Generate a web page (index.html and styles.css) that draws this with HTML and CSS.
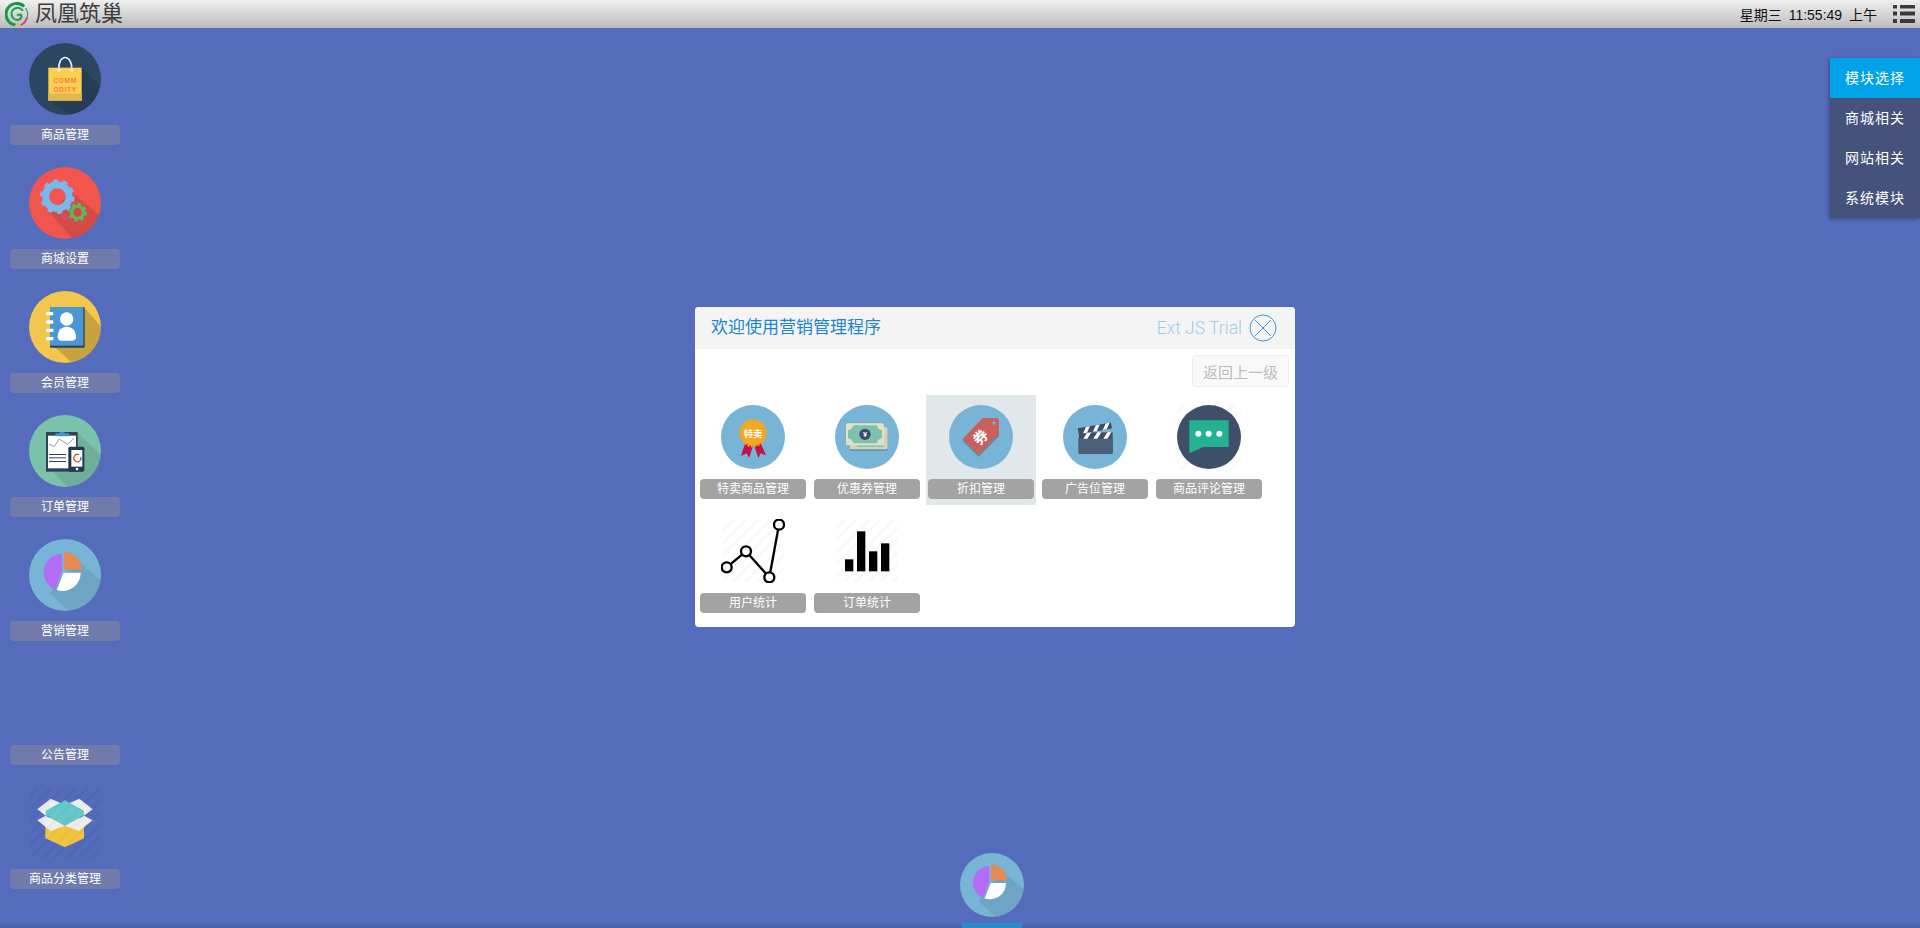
FILE: index.html
```html
<!DOCTYPE html>
<html lang="zh-CN">
<head>
<meta charset="utf-8">
<title>凤凰筑巢</title>
<link rel="stylesheet" href="styles.css">
</head>
<body>
<svg class="defs" width="0" height="0" aria-hidden="true">
  <defs>
    <pattern id="hatch" width="26" height="26" patternUnits="userSpaceOnUse" patternTransform="rotate(45)">
      <rect width="10" height="26" fill="#000" fill-opacity=".025"/>
    </pattern>
    <symbol id="pie" viewBox="87 27 216 216">
      <clipPath id="pieClip"><circle cx="195" cy="135" r="108"/></clipPath>
      <circle cx="195" cy="135" r="108" fill="#78b4d6"/>
      <polygon points="225,85 320,165 320,260 225,260 150,190" fill="#000" fill-opacity=".08" clip-path="url(#pieClip)"/>
      <path d="M186 71A56 56 0 0 0 164 178L186 124Z" fill="#b56cf5"/>
      <path d="M192 66A55 55 0 0 1 246 119H192Z" fill="#e58a54"/>
      <path d="M191 128H242A54 54 0 0 1 170 180Z" fill="#fff"/>
    </symbol>
  </defs>
</svg>

<header class="topbar">
  <div class="brand">
    <svg class="brand-mark" viewBox="15 2 74 74">
      <path d="M72 15A32 32 0 1 0 46 70" fill="none" stroke="#159a45" stroke-width="9"/>
      <path d="M68 28A18 18 0 1 0 54 55C62 52 65 46 63 40H50" fill="none" stroke="#1ea04c" stroke-width="6"/>
      <path d="M76 20A34 34 0 0 1 60 71" fill="none" stroke="#1a9a5a" stroke-width="3"/>
      <path d="M80 48A32 32 0 0 1 62 70" fill="none" stroke="#e8367e" stroke-width="5"/>
      <path d="M62 70A32 32 0 0 1 44 72" fill="none" stroke="#f4b92f" stroke-width="4"/>
    </svg>
    <span class="brand-name">凤凰筑巢</span>
  </div>
  <div class="status">
    <span class="clock">星期三 11:55:49 上午</span>
    <svg class="list-icon" viewBox="0 0 22 18">
      <rect x="0" y="0" width="4" height="3.5"/><rect x="7" y="0" width="15" height="3.5"/>
      <rect x="0" y="6.5" width="4" height="4"/><rect x="7" y="6.5" width="15" height="4"/>
      <rect x="0" y="14" width="4" height="4"/><rect x="7" y="14" width="15" height="4"/>
    </svg>
  </div>
</header>

<main class="desktop">
  <nav class="shortcuts">
    <a class="shortcut">
      <svg class="shortcut-icon" viewBox="87 129 216 216">
        <clipPath id="c1"><circle cx="195" cy="237" r="108"/></clipPath>
        <circle cx="195" cy="237" r="108" fill="#2b4661"/>
        <polygon points="245,203 320,278 320,360 230,360 145,302" fill="#000" fill-opacity=".12" clip-path="url(#c1)"/>
        <path d="M177 210C172 160 218 160 215 210" fill="none" stroke="#e8edf2" stroke-width="5"/>
        <rect x="145" y="203" width="100" height="99" fill="#fdcf4e"/>
        <rect x="145" y="281" width="100" height="21" fill="#e2b551"/>
        <circle cx="177" cy="211" r="5" fill="#e8edf2"/><circle cx="215" cy="211" r="5" fill="#e8edf2"/>
        <text class="bag-text" x="195" y="248">COMM</text>
        <text class="bag-text" x="195" y="275">ODITY</text>
      </svg>
      <span class="shortcut-label">商品管理</span>
    </a>
    <a class="shortcut">
      <svg class="shortcut-icon" viewBox="87 501 216 216">
        <clipPath id="c2"><circle cx="195" cy="609" r="108"/></clipPath>
        <circle cx="195" cy="609" r="108" fill="#f2554e"/>
        <polygon points="215,575 320,665 320,730 230,730 150,640" fill="#000" fill-opacity=".12" clip-path="url(#c2)"/>
        <circle cx="172" cy="590" r="35.5" fill="none" stroke="#7bb8ea" stroke-width="21"/>
        <circle cx="172" cy="590" r="48" fill="none" stroke="#7bb8ea" stroke-width="8" stroke-dasharray="15 15.16"/>
        <circle cx="233" cy="637" r="18" fill="none" stroke="#5cb85f" stroke-width="10"/>
        <circle cx="233" cy="637" r="25" fill="none" stroke="#5cb85f" stroke-width="6" stroke-dasharray="10 9.63"/>
        <circle cx="197" cy="650" r="7" fill="none" stroke="#c8577f" stroke-width="4"/>
      </svg>
      <span class="shortcut-label">商城设置</span>
    </a>
    <a class="shortcut">
      <svg class="shortcut-icon" viewBox="87 63 216 216">
        <clipPath id="c3"><circle cx="195" cy="171" r="108"/></clipPath>
        <circle cx="195" cy="171" r="108" fill="#f3c64d"/>
        <polygon points="252,112 320,190 320,300 240,300 165,232" fill="#000" fill-opacity=".18" clip-path="url(#c3)"/>
        <rect x="150" y="111" width="104" height="122" rx="3" fill="#2c4257"/>
        <rect x="150" y="111" width="100" height="116" fill="#4b96d3"/>
        <rect x="138" y="126" width="22" height="10" rx="2" fill="#fff"/>
        <rect x="138" y="151" width="22" height="10" rx="2" fill="#fff"/>
        <rect x="138" y="176" width="22" height="10" rx="2" fill="#fff"/>
        <rect x="138" y="201" width="22" height="10" rx="2" fill="#fff"/>
        <circle cx="200" cy="147" r="20" fill="#fff"/>
        <path d="M173 202C173 180 185 170 200 170S228 180 228 202C228 209 222 212 216 212H185C178 212 173 209 173 202Z" fill="#fff"/>
      </svg>
      <span class="shortcut-label">会员管理</span>
    </a>
    <a class="shortcut">
      <svg class="shortcut-icon" viewBox="87 435 216 216">
        <clipPath id="c4"><circle cx="195" cy="543" r="108"/></clipPath>
        <circle cx="195" cy="543" r="108" fill="#7bc2ac"/>
        <polygon points="233,490 320,570 320,670 220,670 150,595" fill="#000" fill-opacity=".1" clip-path="url(#c4)"/>
        <rect x="138" y="486" width="95" height="119" fill="#2e4358"/>
        <rect x="144" y="497" width="84" height="98" fill="#fff"/>
        <path d="M166 490H177C178 484 194 484 195 490H207V499H166Z" fill="#4b8fc9"/>
        <polyline points="147,522 163,530 177,507 203,523 222,505" fill="none" stroke="#5c7488" stroke-width="2"/>
        <rect x="147" y="552" width="51" height="3" fill="#2e4358"/>
        <rect x="147" y="562" width="51" height="3" fill="#2e4358"/>
        <rect x="147" y="573" width="51" height="3" fill="#2e4358"/>
        <rect x="205" y="530" width="48" height="75" rx="5" fill="#22384c"/>
        <rect x="214" y="540" width="33" height="50" fill="#fff"/>
        <path d="M237 554A11 11 0 1 0 241 571" fill="none" stroke="#e3552f" stroke-width="4"/>
        <path d="M241 571A11 11 0 0 0 242 560" fill="none" stroke="#2f7fbf" stroke-width="4"/>
        <circle cx="231" cy="597" r="4" fill="#fff"/>
      </svg>
      <span class="shortcut-label">订单管理</span>
    </a>
    <a class="shortcut">
      <svg class="shortcut-icon"><use href="#pie"/></svg>
      <span class="shortcut-label">营销管理</span>
    </a>
    <a class="shortcut">
      <span class="shortcut-icon"></span>
      <span class="shortcut-label">公告管理</span>
    </a>
    <a class="shortcut">
      <svg class="shortcut-icon" viewBox="87 771 216 216">
        <rect x="90" y="775" width="210" height="210" fill="url(#hatch)"/>
        <polygon points="136,870 195,850 252,870 252,925 195,952 136,925" fill="#f2c53f"/>
        <polygon points="112,871 137,857 195,887 152,903" fill="#eeeeee"/>
        <polygon points="278,871 252,857 195,887 238,903" fill="#eeeeee"/>
        <polygon points="112,838 152,806 195,825 137,857" fill="#eeeeee"/>
        <polygon points="278,838 238,806 195,825 252,857" fill="#eeeeee"/>
        <polygon points="137,842 195,811 252,842 252,855 195,887 137,855" fill="#64c8cd"/>
        <rect x="90" y="775" width="210" height="210" fill="url(#hatch)"/>
      </svg>
      <span class="shortcut-label">商品分类管理</span>
    </a>
  </nav>

  <aside class="module-menu">
    <a class="module-item is-active">模块选择</a>
    <a class="module-item">商城相关</a>
    <a class="module-item">网站相关</a>
    <a class="module-item">系统模块</a>
  </aside>

  <section class="window">
    <header class="window-head">
      <h1 class="window-title">欢迎使用营销管理程序</h1>
      <span class="trial">Ext JS Trial</span>
      <svg class="close" viewBox="0 0 28 28">
        <circle cx="14" cy="14" r="13" fill="none" stroke="#4c94cf" stroke-width="1"/>
        <path d="M6 6L22 22M22 6L6 22" stroke="#4c94cf" stroke-width="1" fill="none"/>
      </svg>
    </header>
    <div class="toolbar"><button class="back" type="button">返回上一级</button></div>
    <div class="grid">
      <a class="tile">
        <svg class="tile-icon" viewBox="93 315 192 192">
          <circle cx="189" cy="411" r="96" fill="#78b4d6"/>
          <polygon points="165,430 153,468 170,460 177,474 190,435" fill="#c4104f"/>
          <polygon points="192,435 205,474 212,460 228,466 212,430" fill="#c4104f"/>
          <circle cx="189" cy="399" r="38" fill="#f5a81f"/>
          <circle cx="189" cy="399" r="40" fill="none" stroke="#f5a81f" stroke-width="5" stroke-dasharray="6 4.47"/>
          <text class="medal-text" x="189" y="411">特卖</text>
        </svg>
        <span class="tile-label">特卖商品管理</span>
      </a>
      <a class="tile">
        <svg class="tile-icon" viewBox="435 315 192 192">
          <circle cx="531" cy="411" r="96" fill="#78b4d6"/>
          <rect x="480" y="385" width="114" height="67" rx="6" fill="#5f93a8"/>
          <rect x="480" y="382" width="113" height="66" rx="5" fill="#d6d3bd"/>
          <rect x="500" y="436" width="80" height="5" fill="#7dc3ac"/>
          <rect x="468" y="370" width="114" height="66" rx="5" fill="#e3e0ca"/>
          <path d="M490 376H560C562 384 568 390 576 391V415C568 416 562 422 560 430H490C488 422 482 416 474 415V391C482 390 488 384 490 376Z" fill="#7dc3ac"/>
          <circle cx="525" cy="403" r="17" fill="#3d4b6b"/>
          <text class="yen-text" x="525" y="411">¥</text>
        </svg>
        <span class="tile-label">优惠券管理</span>
      </a>
      <a class="tile is-selected">
        <svg class="tile-icon" viewBox="777 315 192 192">
          <circle cx="873" cy="411" r="96" fill="#78b4d6"/>
          <polygon points="878,360 927,360 927,409 866,471 818,423" fill="#5a8fae"/>
          <polygon points="878,354 922,354 927,359 927,403 866,465 818,417" fill="#c8605c"/>
          <circle cx="912" cy="369" r="5" fill="#78b4d6"/>
          <text class="tag-text" x="872" y="428" transform="rotate(-45 872 412)">券</text>
        </svg>
        <span class="tile-label">折扣管理</span>
      </a>
      <a class="tile">
        <svg class="tile-icon" viewBox="99 315 192 192">
          <circle cx="195" cy="411" r="96" fill="#78b4d6"/>
          <rect x="145" y="414" width="104" height="48" rx="3" fill="#4d607a"/>
          <rect x="147" y="397" width="101" height="19" fill="#3f4d66"/>
          <path d="M160 416L172 397H184L172 416ZM190 416L202 397H214L202 416ZM220 416L232 397H244L232 416Z" fill="#fff"/>
          <g transform="rotate(-10 195 385)">
            <rect x="144" y="376" width="101" height="18" fill="#3f4d66"/>
            <path d="M157 394L169 376H181L169 394ZM187 394L199 376H211L199 394ZM217 394L229 376H241L229 394Z" fill="#fff"/>
          </g>
        </svg>
        <span class="tile-label">广告位管理</span>
      </a>
      <a class="tile">
        <svg class="tile-icon" viewBox="441 315 192 192">
          <rect x="441" y="315" width="192" height="192" fill="url(#hatch)"/>
          <circle cx="537" cy="411" r="96" fill="#3e5069"/>
          <path d="M478 361H596V441H520L478 460Z" fill="#22b28f"/>
          <circle cx="505" cy="401" r="9" fill="#fff"/><circle cx="536" cy="401" r="9" fill="#fff"/><circle cx="568" cy="401" r="9" fill="#fff"/>
        </svg>
        <span class="tile-label">商品评论管理</span>
      </a>
      <a class="tile">
        <svg class="tile-icon" viewBox="93 57 192 192">
          <rect x="98" y="60" width="184" height="185" fill="url(#hatch)"/>
          <polyline points="110,202 168,154 238,232 267,74" fill="none" stroke="#000" stroke-width="7"/>
          <circle cx="110" cy="202" r="15" fill="#fff" stroke="#000" stroke-width="7"/>
          <circle cx="168" cy="154" r="15" fill="#fff" stroke="#000" stroke-width="7"/>
          <circle cx="238" cy="232" r="15" fill="#fff" stroke="#000" stroke-width="7"/>
          <circle cx="267" cy="74" r="15" fill="#fff" stroke="#000" stroke-width="7"/>
        </svg>
        <span class="tile-label">用户统计</span>
      </a>
      <a class="tile">
        <svg class="tile-icon" viewBox="435 57 192 192">
          <rect x="440" y="60" width="184" height="185" fill="url(#hatch)"/>
          <rect x="465" y="178" width="25" height="36"/>
          <rect x="501" y="94" width="25" height="120"/>
          <rect x="537" y="154" width="25" height="60"/>
          <rect x="573" y="130" width="25" height="84"/>
        </svg>
        <span class="tile-label">订单统计</span>
      </a>
    </div>
  </section>

  <div class="dock">
    <svg class="dock-icon"><use href="#pie"/></svg>
    <span class="dock-bar"></span>
  </div>
</main>
</body>
</html>
```
FILE: styles.css
```css
* { box-sizing: border-box; }
html, body { margin: 0; height: 100%; }
body {
  display: flex;
  flex-direction: column;
  height: 928px;
  overflow: hidden;
  background: linear-gradient(to bottom, #546cbb calc(100% - 6px), #4a60a8 100%);
  font-family: "Liberation Sans", "Noto Sans CJK SC", sans-serif;
  color: #fff;
}
.defs { position: absolute; }

.topbar {
  flex: none;
  height: 28px;
  display: flex;
  align-items: center;
  justify-content: space-between;
  padding: 0 5px;
  background: linear-gradient(to bottom, #f0f0f0, #bcbcbc);
}
.brand { display: flex; align-items: center; gap: 5px; }
.brand-mark { width: 25px; height: 25px; }
.brand-name { font-size: 22px; color: #3d3d3d; line-height: 28px; }
.status { display: flex; align-items: center; gap: 16px; }
.clock { font-size: 14px; word-spacing: 3px; color: #111; }
.list-icon { width: 22px; height: 18px; fill: #3a3a3a; }

.desktop { position: relative; flex: 1; }

.shortcuts {
  display: flex;
  flex-direction: column;
  width: 130px;
  padding: 15px 0 0 10px;
}
.shortcut {
  display: flex;
  flex-direction: column;
  align-items: center;
  width: 110px;
  height: 124px;
}
.shortcut-icon { display: block; width: 72px; height: 72px; flex: none; }
.shortcut-label {
  width: 110px;
  height: 20px;
  margin-top: 10px;
  border-radius: 4px;
  background: #707bab;
  font-size: 12px;
  line-height: 20px;
  text-align: center;
}

.module-menu {
  position: absolute;
  top: 30px;
  right: 0;
  width: 90px;
  box-shadow: -1px 1px 4px rgba(0, 0, 0, .3);
}
.module-item {
  display: block;
  height: 40px;
  background: #44527c;
  font-size: 14px;
  line-height: 40px;
  letter-spacing: 1px;
  text-align: center;
}
.module-item.is-active { background: #00a2e8; }

.window {
  position: absolute;
  left: 695px;
  top: 279px;
  width: 600px;
  height: 320px;
  border-radius: 4px;
  overflow: hidden;
  background: #fff;
}
.window-head {
  display: flex;
  align-items: center;
  height: 42px;
  padding: 0 18px 0 16px;
  background: #f4f4f4;
}
.window-title {
  flex: 1;
  margin: 0;
  font-size: 17px;
  line-height: 40px;
  font-weight: 400;
  color: #1b85d0;
}
.trial {
  margin-right: 7px;
  font-family: Roboto, "Liberation Sans", sans-serif;
  font-size: 17.5px;
  font-weight: 300;
  color: #a3cce8;
}
.close { width: 28px; height: 28px; }
.toolbar {
  display: flex;
  justify-content: flex-end;
  height: 46px;
  padding: 6px 6px 0 0;
}
.back {
  width: 97px;
  height: 32px;
  padding: 0;
  border: 1px solid #eee;
  border-radius: 3px;
  background: #f9f9f9;
  font: 15px "Liberation Sans", "Noto Sans CJK SC", sans-serif;
  color: #bbb;
}
.grid {
  display: grid;
  grid-template-columns: repeat(5, 110px);
  grid-auto-rows: 110px;
  gap: 4px;
  padding-left: 3px;
}
.tile {
  display: flex;
  flex-direction: column;
  align-items: center;
  padding-top: 10px;
}
.tile.is-selected { background: #e2e7ea; }
.tile-icon { display: block; width: 64px; height: 64px; flex: none; }
.tile-label {
  width: 106px;
  height: 20px;
  margin-top: 10px;
  border-radius: 4px;
  background: #a3a3a3;
  font-size: 12px;
  line-height: 20px;
  text-align: center;
}

.bag-text { font: 700 20px "Liberation Sans", sans-serif; letter-spacing: 2px; fill: #f47c4a; text-anchor: middle; }
.medal-text { font: 700 28px "Noto Sans CJK SC", sans-serif; fill: #fff; text-anchor: middle; }
.yen-text { font: 700 22px "Liberation Sans", sans-serif; fill: #fff; text-anchor: middle; }
.tag-text { font: 700 44px "Noto Sans CJK SC", sans-serif; fill: #fff; text-anchor: middle; }

.dock {
  position: absolute;
  left: 960px;
  bottom: 0;
  display: flex;
  flex-direction: column;
  align-items: center;
  width: 64px;
  height: 75px;
  gap: 6px;
}
.dock-icon { display: block; width: 64px; height: 64px; flex: none; }
.dock-bar { width: 60px; height: 5px; background: #2a8bc8; }
```
